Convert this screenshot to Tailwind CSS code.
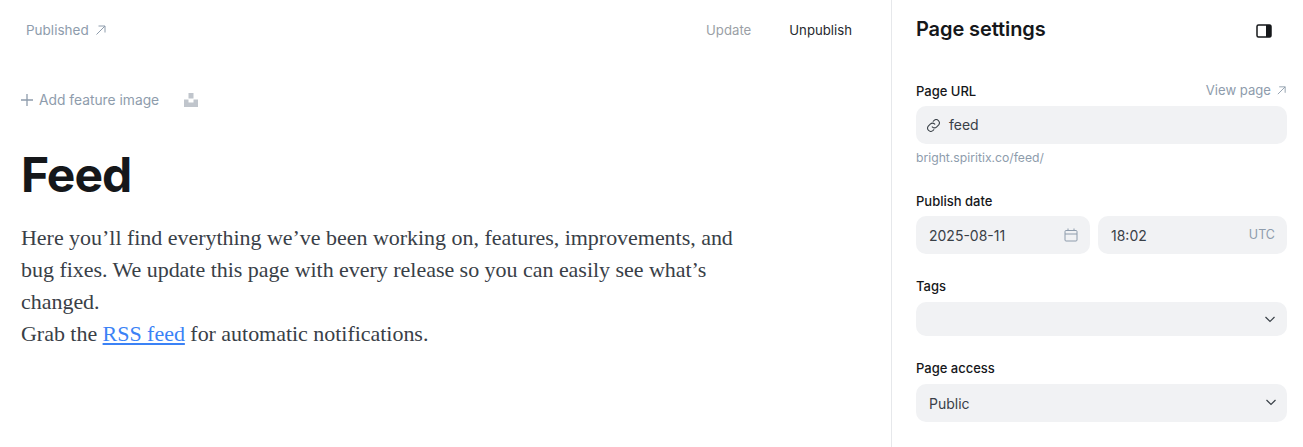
<!DOCTYPE html>
<html lang="en">
<head>
  <meta charset="UTF-8" />
  <title>Page settings</title>
  <script src="https://cdn.jsdelivr.net/npm/@tailwindcss/browser@4"></script>
</head>
<body class="bg-white font-['Inter',sans-serif] overflow-hidden">
<div class="flex h-[447px] w-[1303px]">

  <!-- editor -->
  <main class="w-[891px] shrink-0 flex flex-col">
    <header class="flex items-center justify-between h-[60px] pl-[26px] pr-[39px] text-[13.2px]">
      <div class="flex items-center gap-[6px] text-[13.5px] text-[#8e9cac]">
        <span>Published</span>
        <svg class="w-[12px] h-[12px]" viewBox="0 0 12 12" fill="none" stroke="currentColor" stroke-width="1"><path d="M1.500 10.500 10 2M3.500 2H10v6.500"/></svg>
      </div>
      <div class="flex items-center gap-[38px] mt-[2px]">
        <span class="text-[#9b9fa6]">Update</span>
        <span class="text-[#26292e]">Unpublish</span>
      </div>
    </header>

    <div class="pl-[21px]">
      <div class="flex items-center h-[20px] mt-[30px] text-[13.8px] text-[#8e9cac]">
        <svg class="w-[12px] h-[12px] mr-[6px]" viewBox="0 0 12 12" fill="none" stroke="currentColor" stroke-width="1.3"><path d="M6 0v12M0 6h12"/></svg>
        <span>Add feature image</span>
        <svg class="w-[14px] h-[14px] ml-[25px]" viewBox="0 0 14 14" fill="#c0c5cc"><path d="M4.500 0h5v5.500h-5zM0 6.500h4.500v3h5v-3H14V14H0z"/></svg>
      </div>
      <h1 class="mt-[36px] text-[48px] leading-[58px] font-bold tracking-[-0.02em] text-[#15171a]">Feed</h1>
      <div class="mt-[18px] w-[730px] font-['Liberation_Serif',serif] text-[22px] tracking-[-0.03px] leading-[32px] text-[#394047]">
        <p>Here you’ll find everything we’ve been working on, features, improvements, and bug fixes. We update this page with every release so you can easily see what’s changed.</p>
        <p>Grab the <a href="#" class="text-[#3b82f6] underline">RSS feed</a> for automatic notifications.</p>
      </div>
    </div>
  </main>

  <!-- settings panel -->
  <aside class="flex-1 border-l border-[#e6e8eb] pl-[24px] pr-[16px]">
    <div class="flex items-center justify-between h-[58px] pr-[15px]">
      <h2 class="text-[20px] font-semibold tracking-[-0.005em] text-[#15171a]">Page settings</h2>
      <svg class="w-[16px] h-[14px] mt-[3px]" viewBox="0 0 16 14" fill="none"><rect x="1" y="1" width="14" height="12" rx="1.500" stroke="#15171a" stroke-width="1.500"/><path d="M10 1h4a1 1 0 0 1 1 1v10a1 1 0 0 1-1 1h-4z" fill="#15171a"/></svg>
    </div>

    <div class="mt-[23px]">
      <div class="flex items-center justify-between h-[20px] text-[13px]">
        <span class="text-[#15171a] font-[450] mt-[1px]">Page URL</span>
        <span class="flex items-center gap-[5px] text-[#8e9cac] text-[13.1px]">View page
          <svg class="w-[11px] h-[11px]" viewBox="0 0 12 12" fill="none" stroke="currentColor" stroke-width="1"><path d="M2 10 10 2M3.500 2H10v6.500"/></svg>
        </span>
      </div>
      <div class="mt-[5px] flex items-center h-[38px] rounded-[10px] bg-[#f1f2f4] px-[11px] text-[14px] text-[#394047]">
        <svg class="w-[13px] h-[13px] mr-[9px]" viewBox="2 2 20 20" fill="none" stroke="currentColor" stroke-width="1.600" stroke-linecap="round"><path d="M10 14a5 5 0 0 0 7 0l3-3a5 5 0 0 0-7-7l-1.500 1.500"/><path d="M14 10a5 5 0 0 0-7 0l-3 3a5 5 0 0 0 7 7l1.500-1.500"/></svg>
        <span class="-mt-[1px]">feed</span>
      </div>
      <p class="mt-[6px] text-[12.2px] leading-[16px] text-[#8e9cac]">bright.spiritix.co/feed/</p>
    </div>

    <div class="mt-[26px]">
      <div class="h-[20px] text-[13px] font-[450] text-[#15171a]">Publish date</div>
      <div class="mt-[4px] flex gap-[8px]">
        <div class="flex items-center justify-between w-[174px] h-[38px] rounded-[10px] bg-[#f1f2f4] pl-[13px] pr-[12px] text-[14px] text-[#394047]">
          <span>2025-08-11</span>
          <svg class="w-[14px] h-[14px]" viewBox="0 0 14 14" fill="none" stroke="#8e9cac" stroke-width="1"><rect x="1" y="2.500" width="12" height="10.500" rx="1"/><path d="M1 6h12M4 .5V3M10 .5V3"/></svg>
        </div>
        <div class="flex items-center justify-between flex-1 h-[38px] rounded-[10px] bg-[#f1f2f4] pl-[13px] pr-[12px] text-[14px] text-[#394047]">
          <span>18:02</span>
          <span class="text-[12.500px] text-[#8e9cac]">UTC</span>
        </div>
      </div>
    </div>

    <div class="mt-[23px]">
      <div class="h-[20px] text-[13px] font-[450] text-[#15171a]">Tags</div>
      <div class="mt-[5px] flex items-center justify-end h-[34px] rounded-[10px] bg-[#f1f2f4] pr-[11px]">
        <svg class="w-[12px] h-[12px]" viewBox="0 0 12 12" fill="none" stroke="#394047" stroke-width="1.200"><path d="M1.500 4 6 8.500 10.500 4"/></svg>
      </div>
    </div>

    <div class="mt-[23px]">
      <div class="h-[20px] text-[13px] font-[450] text-[#15171a]">Page access</div>
      <div class="mt-[5px] flex items-center justify-between h-[38px] rounded-[10px] bg-[#f1f2f4] pl-[13px] pr-[10px] text-[14px] text-[#394047]">
        <span>Public</span>
        <svg class="w-[12px] h-[12px] -mt-[2px]" viewBox="0 0 12 12" fill="none" stroke="#394047" stroke-width="1.200"><path d="M1.500 4 6 8.500 10.500 4"/></svg>
      </div>
    </div>
  </aside>
</div>
</body>
</html>
